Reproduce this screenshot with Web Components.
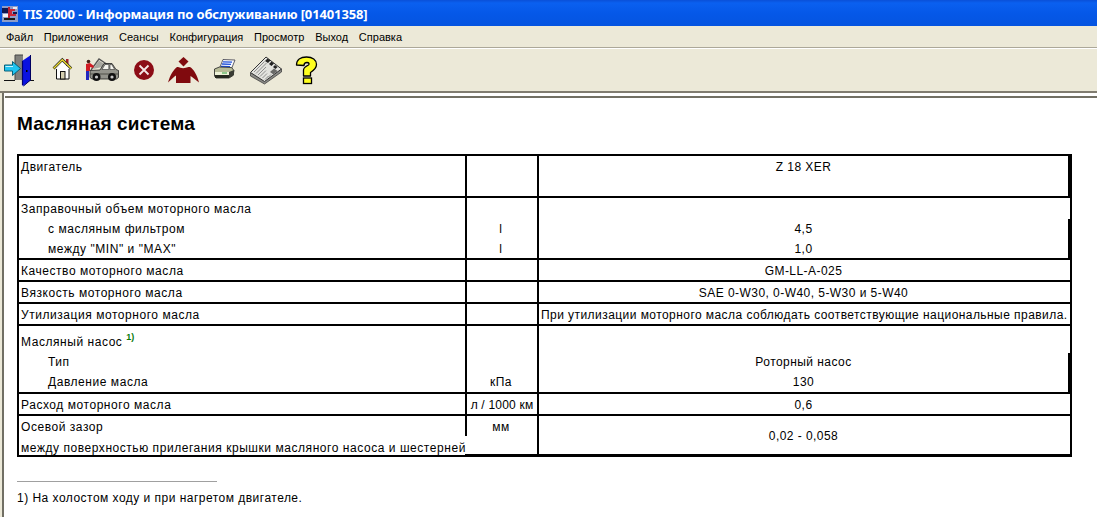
<!DOCTYPE html>
<html>
<head>
<meta charset="utf-8">
<style>
  html, body { margin: 0; height: 100%; overflow: hidden; }
  body { font-family: "Liberation Sans", Arial, sans-serif; background: #ece9d8; }
</style>
</head>
<body>
<tis-window>
  <tis-titlebar>TIS 2000 - Информация по обслуживанию [01401358]</tis-titlebar>
  <tis-menubar></tis-menubar>
  <tis-toolbar></tis-toolbar>
  <tis-document>
    <h1 slot="heading">Масляная система</h1>
    <spec-table>
      <spec-row height="40" thick-from="0">
        <span slot="name">Двигатель</span>
        <span slot="value">Z 18 XER</span>
      </spec-row>
      <spec-row height="60" thick-from="21">
        <span slot="name">Заправочный объем моторного масла<br><i>с масляным фильтром</i><br><i>между "MIN" и "MAX"</i></span>
        <span slot="unit" class="litre"><br>l<br>l</span>
        <span slot="value"><br>4,5<br>1,0</span>
      </spec-row>
      <spec-row height="20">
        <span slot="name">Качество моторного масла</span>
        <span slot="value">GM-LL-A-025</span>
      </spec-row>
      <spec-row height="20">
        <span slot="name">Вязкость моторного масла</span>
        <span slot="value">SAE 0-W30, 0-W40, 5-W30 и 5-W40</span>
      </spec-row>
      <spec-row height="20">
        <span slot="name">Утилизация моторного масла</span>
        <span slot="value" class="left">При утилизации моторного масла соблюдать соответствующие национальные правила.</span>
      </spec-row>
      <spec-row height="66" thick-from="27">
        <span slot="name" class="low">Масляный насос <sup>1)</sup><br><i>Тип</i><br><i>Давление масла</i></span>
        <span slot="unit" class="low"><br><br>кПа</span>
        <span slot="value" class="low"><br>Роторный насос<br>130</span>
      </spec-row>
      <spec-row height="20">
        <span slot="name">Расход моторного масла</span>
        <span slot="unit" class="tight">л / 1000 км</span>
        <span slot="value">0,6</span>
      </spec-row>
      <spec-row height="39" last>
        <span slot="name">Осевой зазор<br>между поверхностью прилегания крышки масляного насоса и шестерней</span>
        <span slot="unit">мм</span>
        <span slot="value" class="mid">0,02 - 0,058</span>
      </spec-row>
    </spec-table>
    <hr slot="rule">
    <span slot="note">1) На холостом ходу и при нагретом двигателе.</span>
  </tis-document>
</tis-window>

<template id="tis-window">
  <style>
    :host { display: flex; flex-direction: column; height: 517px; width: 1097px; overflow: hidden; }
  </style>
  <slot></slot>
</template>

<template id="tis-titlebar">
  <style>
    :host {
      display: flex; align-items: center; height: 26px; flex: none; box-sizing: border-box; padding: 1px 0 0 2px;
      background: linear-gradient(180deg, #0a50d8 0, #0a60f0 3px, #0558e8 50%, #0554e0 100%);
      color: #fff; font: bold 13px "Noto Sans", sans-serif; white-space: nowrap; letter-spacing: -.12px;
    }
    svg { margin-right: 5px; flex: none; }
  </style>
  <svg width="16" height="16" viewBox="0 0 16 16">
    <rect width="16" height="16" fill="#8c9cc8"/>
    <rect x="0" y="2" width="6" height="5" fill="#101850"/>
    <rect x="1" y="8" width="5" height="3" fill="#f4f4f4"/>
    <rect x="6" y="1" width="2" height="12" fill="#c02030"/>
    <path d="M8 3h5v2H10v3h4v2H8z" fill="#c8283a"/>
    <rect x="11" y="1" width="4" height="2" fill="#e8e8f0"/>
    <rect x="2" y="12" width="11" height="2" fill="#181818"/>
    <rect x="11" y="6" width="4" height="2" fill="#141c50"/>
  </svg>
  <span><slot></slot></span>
</template>

<template id="tis-toolbar">
  <style>
    :host {
      display: flex; align-items: flex-start; flex: none; height: 43px; box-sizing: border-box;
      background: #ece9d8; border-top: 1px solid #fff;
    }
    svg { display: block; flex: none; overflow: visible; }
  </style>
  <!-- the viewBoxes are in window pixels, so the shapes can be read against the reference -->
  <!-- exit door -->
  <svg width="32" height="33" viewBox="3 54 32 33" style="margin:5px 0 0 3px">
    <path d="M15 55h8v25h-8z" fill="#80807c"/>
    <path d="M15 55h8M15 55v25" stroke="#444" stroke-width="1" fill="none"/>
    <path d="M4 80.500h11M30 80.500h4" stroke="#111" stroke-width="1"/>
    <path d="M22 61l9-6v25l-8 6-1-1z" fill="#0a12e0"/>
    <path d="M22.500 61v24" stroke="#000070" stroke-width="1.200"/>
    <path d="M30.500 55v25l-7 6" stroke="#000060" stroke-width="1" fill="none"/>
    <rect x="26" y="70" width="1.500" height="2" fill="#000"/>
    <path d="M4.500 65h8v-3.500l8 7-8 7V71h-8z" fill="#20c4f0" stroke="#086078" stroke-width="1"/>
    <path d="M5.500 66.500h7.500" stroke="#c8f4ff" stroke-width="1"/>
  </svg>
  <!-- home -->
  <svg width="21" height="22" viewBox="52 58 21 22" style="margin:9px 0 0 17px">
    <rect x="66" y="59" width="2.500" height="7" fill="#a02028"/>
    <path d="M56.500 68.500l6-6.500 6.500 6.500V79h-12.500z" fill="#fff"/>
    <path d="M53.500 68.500l8.800-8.800 9 8.800" fill="none" stroke="#222" stroke-width="2.600"/>
    <path d="M53.500 68.500l8.800-8.800 9 8.800" fill="none" stroke="#f0e030" stroke-width="1.300"/>
    <path d="M56.500 69v10h12.500V69" fill="none" stroke="#111" stroke-width="1"/>
    <rect x="60.500" y="71.500" width="4.500" height="7.500" fill="#d4ceb0" stroke="#111" stroke-width="1"/>
  </svg>
  <!-- mechanic and car -->
  <svg width="34" height="24" viewBox="85 59 34 24" style="margin:10px 0 0 12px">
    <path d="M91 70L99 59l9 6" fill="none" stroke="#555" stroke-width="1.300"/>
    <path d="M93 69l6-8.500 8 5.500z" fill="#a8a8a0"/>
    <path d="M90 70.500l10-.5 4-6.500h8l4 6 2.500 1v7l-2 1.500H92l-2-1.500z" fill="#94948c" stroke="#222" stroke-width=".8"/>
    <path d="M105 64.500h3.800v5H102zM110 64.500h1.700l3 5H110z" fill="#f4f4ee" stroke="#333" stroke-width=".6"/>
    <path d="M90 74h28" stroke="#505048" stroke-width="1"/>
    <circle cx="96.500" cy="77" r="4" fill="#111"/><circle cx="96.500" cy="77" r="1.600" fill="#c8c8c8"/>
    <circle cx="112" cy="77" r="4" fill="#111"/><circle cx="112" cy="77" r="1.600" fill="#c8c8c8"/>
    <rect x="86" y="70" width="3" height="10" fill="#2226c0"/>
    <path d="M86 64l4-1 4 3-1 2-3-1v4h-4z" fill="#d01c24"/>
    <circle cx="88.500" cy="61.500" r="1.800" fill="#402018"/>
  </svg>
  <!-- stop -->
  <svg width="22" height="22" viewBox="133 59 22 22" style="margin:10px 0 0 14px">
    <circle cx="144" cy="70" r="10" fill="#8c0c16"/>
    <path d="M139.500 65.500l9 9M148.500 65.500l-9 9" stroke="#f4e6e6" stroke-width="1.800"/>
  </svg>
  <!-- person -->
  <svg width="33" height="28" viewBox="167 56 33 28" style="margin:7px 0 0 12px">
    <path d="M183.500 57l5 4.500-5 5-5-5z" fill="#800a0e"/>
    <path d="M178 67c3 1.500 7 1.500 10.500 0h1.500c4 2.500 7 8 9 15.500l-7-5.500-1.500-1V83h-14.500v-7.500l-1.500 1L168 82.500c2-7 5-12.500 9-15.500z" fill="#800a0e"/>
  </svg>
  <!-- printer -->
  <svg width="22" height="22" viewBox="213 58 22 22" style="margin:9px 0 0 13px">
    <path d="M223 59.500l12 .5-4 10-12-.5z" fill="#f6f8ff" stroke="#223" stroke-width=".7"/>
    <path d="M223 61.800l9 .3M222 64l9 .3M221 66.300l9 .3" stroke="#2050d8" stroke-width="1.300"/>
    <path d="M214.500 69l5-2 12 .5 2.500 3-1 5-4 2.500h-13l-1.500-2z" fill="#b8bc98" stroke="#222" stroke-width=".8"/>
    <path d="M215 72h14v3h-14z" fill="#eef2d8"/>
    <path d="M229 72l5-2v5l-5 3z" fill="#3a3c34"/>
    <path d="M215 75h14v3h-14z" fill="#26281f"/>
    <rect x="222" y="72.500" width="5" height="1" fill="#30a040"/>
  </svg>
  <!-- newspaper -->
  <svg width="34" height="30" viewBox="249 56 34 30" style="margin:7px 0 0 14px">
    <path d="M250.500 73v3l14 8 17-12v-3z" fill="#8a8a86" stroke="#333" stroke-width=".7"/>
    <path d="M250.500 72.500L266 57l15.500 12-17 12.500z" fill="#e2e2de" stroke="#333" stroke-width="1"/>
    <path d="M254 72l10.500-10.500M256 73.500l10.500-10.500M258 75l8-8M260 76.500l6-6M262.500 78l4.500-4.500M265 79.500l3.500-3.500M268 77.500l3-3" stroke="#777" stroke-width=".8"/>
    <path d="M265 61l2.500-2.500 3 2-2.500 2.500zM269 64l2.500-2.500 2.500 2-2.500 2.500zM273 67l2-2 2.500 2-2 2z" fill="#222"/>
    <path d="M270 72l4-3.500 3.500 2.500-4 3.500z" fill="#6a6a68"/>
  </svg>
  <!-- help -->
  <svg width="23" height="29" viewBox="295 56 23 29" style="margin:7px 0 0 12px">
    <path d="M296.500 65c0-5 4-8 10-8s10 3 10 7.500c0 4-3 6-6 8v3.500h-7v-6c0-2 3-4 5-5 1-1 .7-2.500-1.500-2.500s-3 1-3 3z" fill="#ffff20" stroke="#000" stroke-width="1.300" stroke-linejoin="round"/>
    <rect x="303.500" y="78" width="8" height="5.500" fill="#ffff20" stroke="#000" stroke-width="1.300"/>
  </svg>
</template>

<template id="tis-document">
  <style>
    :host {
      display: block; flex: 1; min-height: 0; background: #fff; color: #000; box-sizing: border-box;
      border-top: 2px solid #807c70;
      position: relative; padding: 0 0 0 17px;
      font: 12px "Liberation Sans", Arial, sans-serif;
    }
    .edge { position: absolute; inset: 0 0 auto 0; height: 5px; background: linear-gradient(#fff 0 3px, #716f64 3px 5px); }
    .left { position: absolute; left: 0; top: 0; bottom: 0; width: 5px; background: linear-gradient(90deg, #ece9d8 0 2px, #716f64 2px 4px, #fff 4px); }
    ::slotted(h1) { margin: 0; font: bold 19px "Liberation Sans", Arial, sans-serif; letter-spacing: .15px; padding-top: 20px; height: 41px; }
    ::slotted(hr) { width: 200px; height: 1px; border: 0; background: #a0a0a0; margin: 24px 0 0 0; }
    ::slotted([slot=note]) { display: block; margin-top: 9px; letter-spacing: .48px; }
  </style>
  <div class="edge"></div><div class="left"></div>
  <slot name="heading"></slot>
  <slot></slot>
  <slot name="rule"></slot>
  <slot name="note"></slot>
</template>

<template id="spec-table">
  <style>
    :host {
      display: block; width: 1055px; box-sizing: border-box;
      border: 2px solid #000;
    }
  </style>
  <slot></slot>
</template>

<template id="spec-row">
  <style>
    :host { display: grid; grid-template-columns: 446px 72px 1fr; grid-template-rows: 100%; border-bottom: 2px solid #000; position: relative; line-height: 20px; }
    :host([last]) { border-bottom: 0; }
    .cell { padding: 1px 0 0 2px; white-space: nowrap; letter-spacing: .55px; box-sizing: border-box; }
    .unit, .value { border-left: 2px solid #000; text-align: center; padding: 1px 2px 0 0; letter-spacing: .45px; position: relative; }
    :host([last]) .name { line-height: 21px; }
    /* the long label in the last row eats the column line, the right part of the bottom line is thicker */
    :host([last]) .unit { border-left-color: transparent; }
    :host([last]) .unit::before { content: ""; position: absolute; left: -2px; top: 0; width: 2px; height: 20px; background: #000; }
    :host([last]) .unit::after, :host([last]) .value::after { content: ""; position: absolute; left: -2px; right: 0; bottom: 0; height: 1px; background: #000; }
    .thick { position: absolute; right: 0; bottom: 0; width: 2px; background: #000; }
    ::slotted(span) { display: block; }
    ::slotted(span.left) { text-align: left; padding-left: 2px; letter-spacing: .44px; }
    ::slotted(span.mid) { padding-top: 9px; }
    ::slotted(span.low) { padding-top: 5px; }
    ::slotted(span.tight) { letter-spacing: .2px; margin-right: -2px; }
    ::slotted(span.litre) { letter-spacing: 0; padding-right: 1px; }
  </style>
  <div class="cell name"><slot name="name"></slot></div>
  <div class="cell unit"><slot name="unit"></slot></div>
  <div class="cell value"><slot name="value"></slot></div>
  <div class="thick"></div>
</template>

<script>
  // every element here only clones its template, the row also takes a height
  function simple(name) {
    customElements.define(name, class extends HTMLElement {
      constructor() {
        super();
        const shadowRoot = this.attachShadow({ mode: 'open' });
        shadowRoot.appendChild(document.getElementById(name).content.cloneNode(true));
      }
    });
  }
  ['tis-window', 'tis-titlebar', 'tis-toolbar', 'tis-document', 'spec-table'].forEach(simple);

  customElements.define('tis-menubar', class extends HTMLElement {
    constructor() {
      super();
      const shadowRoot = this.attachShadow({ mode: 'open' });
      const items = ['Файл', 'Приложения', 'Сеансы', 'Конфигурация', 'Просмотр', 'Выход', 'Справка'];
      shadowRoot.innerHTML = `<style>
        :host { display: flex; flex: none; height: 22px; box-sizing: border-box; padding: 0 0 0 6px; gap: 10.800px;
          background: #ece9d8; color: #000; border-bottom: 1px solid #aca899; align-items: center;
          font: 11px "Liberation Sans", Arial, sans-serif; }
      </style>` + items.map((t) => `<span>${t}</span>`).join('');
    }
  });

  customElements.define('spec-row', class extends HTMLElement {
    constructor() {
      super();
      const shadowRoot = this.attachShadow({ mode: 'open' });
      shadowRoot.appendChild(document.getElementById('spec-row').content.cloneNode(true));
    }
    connectedCallback() {
      this.style.height = this.getAttribute('height') + 'px';
      const from = this.getAttribute('thick-from');
      if (from) this.shadowRoot.querySelector('.thick').style.top = from + 'px';
      this.querySelectorAll('i').forEach((i) => {
        i.style.cssText = 'font-style:normal;display:inline-block;padding-left:27px';
      });
      this.querySelectorAll('sup').forEach((s) => {
        s.style.cssText = 'font:bold 9px "Liberation Sans",sans-serif;letter-spacing:0;color:#0a7a0a;vertical-align:6px;line-height:0';
      });
    }
  });
</script>
</body>
</html>
